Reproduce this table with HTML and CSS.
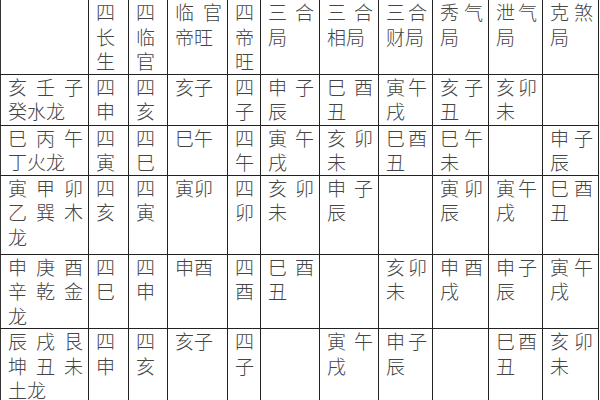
FILE: index.html
```html
<!DOCTYPE html>
<html lang="zh">
<head>
<meta charset="utf-8">
<link rel="stylesheet" href="styles.css">
</head>
<body>
<table class="grid">
  <colgroup>
    <col class="c1"><col class="c2"><col class="c3"><col class="c4"><col class="c5"><col class="c6"><col class="c7"><col class="c8"><col class="c9"><col class="c10"><col class="c11">
  </colgroup>
  <tr class="r0">
    <td></td><td>四长生</td><td>四临官</td><td>临官帝旺</td><td>四帝旺</td><td>三合局</td><td>三合相局</td><td>三合财局</td><td>秀气局</td><td>泄气局</td><td>克煞局</td>
  </tr>
  <tr class="r1">
    <td>亥壬子癸水龙</td><td>四申</td><td>四亥</td><td>亥子</td><td>四子</td><td>申子辰</td><td>巳酉丑</td><td>寅午戌</td><td>亥子丑</td><td>亥卯未</td><td></td>
  </tr>
  <tr class="r2">
    <td>巳丙午丁火龙</td><td>四寅</td><td>四巳</td><td>巳午</td><td>四午</td><td>寅午戌</td><td>亥卯未</td><td>巳酉丑</td><td>巳午未</td><td></td><td>申子辰</td>
  </tr>
  <tr class="r3">
    <td>寅甲卯乙巽木龙</td><td>四亥</td><td>四寅</td><td>寅卯</td><td>四卯</td><td>亥卯未</td><td>申子辰</td><td></td><td>寅卯辰</td><td>寅午戌</td><td>巳酉丑</td>
  </tr>
  <tr class="r4">
    <td>申庚酉辛乾金龙</td><td>四巳</td><td>四申</td><td>申酉</td><td>四酉</td><td>巳酉丑</td><td></td><td>亥卯未</td><td>申酉戌</td><td>申子辰</td><td>寅午戌</td>
  </tr>
  <tr class="r5">
    <td>辰戌艮坤丑未土龙</td><td>四申</td><td>四亥</td><td>亥子</td><td>四子</td><td></td><td>寅午戌</td><td>申子辰</td><td></td><td>巳酉丑</td><td>亥卯未</td>
  </tr>
</table>
</body>
</html>
```
FILE: styles.css
```css
html, body {
  margin: 0;
  padding: 0;
  background: #ffffff;
  overflow: hidden;
}
.grid {
  border-collapse: collapse;
  table-layout: fixed;
  width: 599px;
  font-family: "Noto Sans CJK SC", "Noto Sans CJK JP", sans-serif;
  font-size: 19px;
  font-weight: 300;
  line-height: 24.5px;
  color: #444;
}
.grid td {
  border: 1px solid #222;
  border-top: none;
  vertical-align: top;
  text-align: justify;
  padding: 0 5px 0 7px;
}
.grid td:first-child { border-left-color: #333; }
.c1 { width: 88px; }
.c2 { width: 40px; }
.c3 { width: 39px; }
.c4 { width: 60px; }
.c5 { width: 33px; }
.c6 { width: 59px; }
.c7 { width: 59px; }
.c8 { width: 54px; }
.c9 { width: 56px; }
.c10 { width: 54px; }
.c11 { width: 56px; }
.r0 td { height: 73px; }
.r1 td { height: 50px; }
.r2 td { height: 49px; }
.r3 td { height: 78px; }
.r4 td { height: 72px; }
.r5 td { height: 90px; }
```
